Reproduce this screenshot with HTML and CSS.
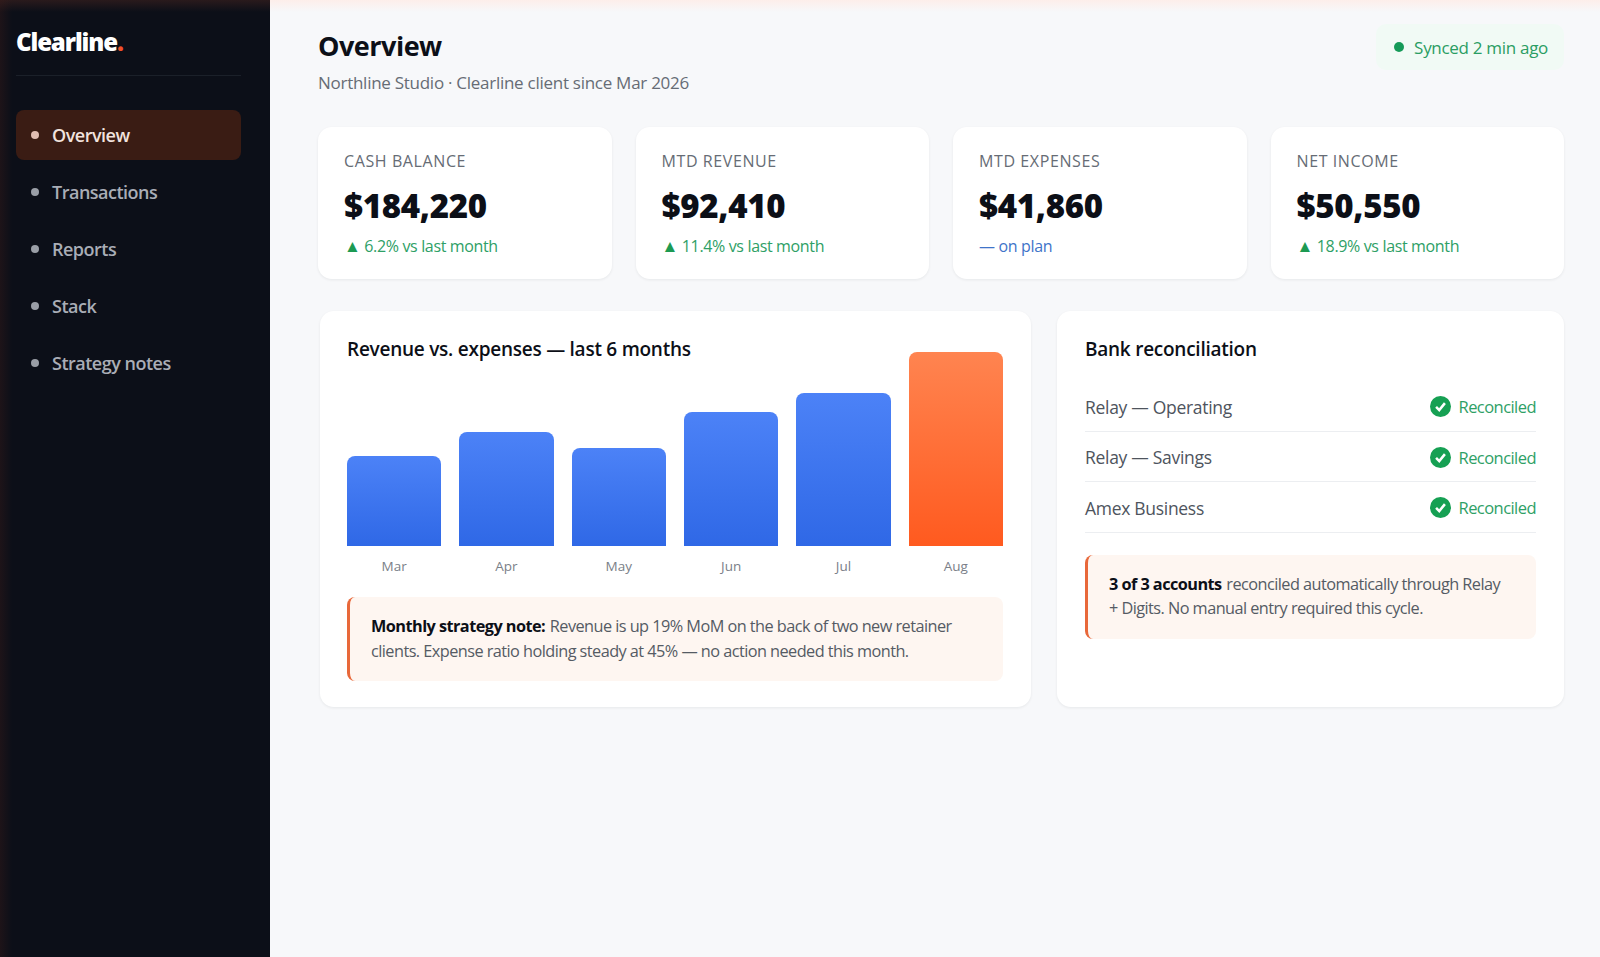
FILE: index.html
```html
<!DOCTYPE html>
<html lang="en">
<head>
    <meta charset="UTF-8">
    <title>Clearline - Overview</title>
    <link rel="stylesheet" href="styles.css">
</head>
<body>
    <aside class="sidebar">
        <div class="logo">Clearline<span>.</span></div>
        <nav class="nav">
            <a class="nav-item active"><i class="dot"></i>Overview</a>
            <a class="nav-item"><i class="dot"></i>Transactions</a>
            <a class="nav-item"><i class="dot"></i>Reports</a>
            <a class="nav-item"><i class="dot"></i>Stack</a>
            <a class="nav-item"><i class="dot"></i>Strategy notes</a>
        </nav>
    </aside>

    <main class="main">
        <header class="page-head">
            <div>
                <h1>Overview</h1>
                <p class="sub">Northline Studio · Clearline client since Mar 2026</p>
            </div>
            <div class="sync"><i class="sync-dot"></i>Synced 2 min ago</div>
        </header>

        <section class="stats">
            <div class="card stat">
                <div class="stat-label">CASH BALANCE</div>
                <div class="stat-value">$184,220</div>
                <div class="stat-delta"><b>▲</b> 6.2% vs last month</div>
            </div>
            <div class="card stat">
                <div class="stat-label">MTD REVENUE</div>
                <div class="stat-value">$92,410</div>
                <div class="stat-delta"><b>▲</b> 11.4% vs last month</div>
            </div>
            <div class="card stat">
                <div class="stat-label">MTD EXPENSES</div>
                <div class="stat-value">$41,860</div>
                <div class="stat-delta flat">— on plan</div>
            </div>
            <div class="card stat">
                <div class="stat-label">NET INCOME</div>
                <div class="stat-value">$50,550</div>
                <div class="stat-delta"><b>▲</b> 18.9% vs last month</div>
            </div>
        </section>

        <section class="panels">
            <div class="card panel">
                <h2>Revenue vs. expenses — last 6 months</h2>
                <div class="chart">
                    <div class="bar-col"><div class="bar" style="height:90px"></div><span>Mar</span></div>
                    <div class="bar-col"><div class="bar" style="height:114px"></div><span>Apr</span></div>
                    <div class="bar-col"><div class="bar" style="height:98px"></div><span>May</span></div>
                    <div class="bar-col"><div class="bar" style="height:134px"></div><span>Jun</span></div>
                    <div class="bar-col"><div class="bar" style="height:153px"></div><span>Jul</span></div>
                    <div class="bar-col"><div class="bar hot" style="height:194px"></div><span>Aug</span></div>
                </div>
                <div class="note"><strong>Monthly strategy note:</strong> Revenue is up 19% MoM on the back of two new retainer clients. Expense ratio holding steady at 45% — no action needed this month.</div>
            </div>

            <div class="card panel bank">
                <h2>Bank reconciliation</h2>
                <div class="bank-list">
                    <div class="bank-row">
                        <span>Relay — Operating</span>
                        <span class="ok"><svg viewBox="0 0 20 20"><circle cx="10" cy="10" r="10" fill="#16a053"/><path d="M5.8 10.4l3 3 5.4-6.6" fill="none" stroke="#fff" stroke-width="2.4"/></svg>Reconciled</span>
                    </div>
                    <div class="bank-row">
                        <span>Relay — Savings</span>
                        <span class="ok"><svg viewBox="0 0 20 20"><circle cx="10" cy="10" r="10" fill="#16a053"/><path d="M5.8 10.4l3 3 5.4-6.6" fill="none" stroke="#fff" stroke-width="2.4"/></svg>Reconciled</span>
                    </div>
                    <div class="bank-row">
                        <span>Amex Business</span>
                        <span class="ok"><svg viewBox="0 0 20 20"><circle cx="10" cy="10" r="10" fill="#16a053"/><path d="M5.8 10.4l3 3 5.4-6.6" fill="none" stroke="#fff" stroke-width="2.4"/></svg>Reconciled</span>
                    </div>
                </div>
                <div class="note"><strong>3 of 3 accounts</strong> reconciled automatically through Relay + Digits. No manual entry required this cycle.</div>
            </div>
        </section>
    </main>
</body>
</html>
```

FILE: styles.css
```css
:root {
    --bg-color: #f7f8fa;
    --ink: #0c0f17;
    --muted: #666c75;
    --green: #16a053;
    --accent: #e8683a;
}

* {
    box-sizing: border-box;
}

html, body {
    height: 100%;
}

body {
    margin: 0;
    display: flex;
    height: 957px;
    overflow: hidden;
    font-family: "Open Sans", "Noto Sans", sans-serif;
    color: var(--ink);
    background: linear-gradient(#fdeeea 0, #f7f8fa 12px) var(--bg-color);
}

.sidebar {
    width: 270px;
    flex: none;
    padding: 27px 29px 0 16px;
    background:
        linear-gradient(90deg, rgba(70, 30, 25, 0.3) 0, rgba(13, 17, 24, 0) 12px),
        linear-gradient(#2a1a1c 0, #0c0f18 12px);
}

.logo {
    color: #fff;
    font-size: 24px;
    font-weight: 800;
    letter-spacing: -1.1px;
    line-height: 30px;
    padding-bottom: 18px;
    border-bottom: 1px solid #1b2029;
}

.logo span {
    color: #f0502a;
}

.nav {
    display: flex;
    flex-direction: column;
    gap: 7px;
    margin-top: 34px;
}

.nav-item {
    display: flex;
    align-items: center;
    gap: 13px;
    height: 50px;
    padding-left: 15px;
    border-radius: 8px;
    color: #a9adb6;
    font-size: 18px;
    font-weight: 600;
    letter-spacing: -0.5px;
}

.nav-item.active {
    background: #3a1c14;
    color: #f2e3de;
}

.dot {
    width: 8px;
    height: 8px;
    border-radius: 50%;
    background: #9a9ea6;
}

.active .dot {
    background: #e0bdb2;
}

.main {
    flex: 1;
    padding: 28px 36px 0 48px;
}

.page-head {
    display: flex;
    justify-content: space-between;
    align-items: flex-start;
}

h1 {
    margin: 0;
    font-size: 27px;
    font-weight: 700;
    letter-spacing: -0.5px;
    line-height: 36px;
}

.sub {
    margin: 8px 0 0;
    font-size: 17px;
    letter-spacing: -0.27px;
    line-height: 22px;
    color: var(--muted);
}

.sync {
    display: flex;
    align-items: center;
    gap: 10px;
    height: 46px;
    margin-top: -4px;
    padding: 0 16px 0 18px;
    border-radius: 10px;
    background: #f1faf5;
    color: #2a9d63;
    font-size: 17px;
    letter-spacing: -0.3px;
}

.sync-dot {
    width: 10px;
    height: 10px;
    border-radius: 50%;
    background: #159a58;
}

.card {
    background: #fff;
    border-radius: 14px;
    box-shadow: 0 1px 3px rgba(20, 25, 35, 0.07);
}

.stats {
    display: grid;
    grid-template-columns: repeat(4, 1fr);
    gap: 24px;
    margin-top: 33px;
}

.stat {
    height: 152px;
    padding: 24px 26px 0;
}

.stat-label {
    font-size: 16px;
    letter-spacing: 0.6px;
    line-height: 20px;
    color: var(--muted);
}

.stat-value {
    margin-top: 13px;
    font-size: 33px;
    font-weight: 800;
    line-height: 44px;
    letter-spacing: -0.3px;
}

.stat-delta {
    margin-top: 8px;
    font-size: 16px;
    letter-spacing: -0.35px;
    line-height: 20px;
    color: #2ea066;
}

.stat-delta b {
    font-size: 17px;
    font-weight: 400;
    line-height: 0;
    color: #1c9a52;
}

.stat-delta.flat {
    color: #3f74c9;
}

.panels {
    display: grid;
    grid-template-columns: 711px 1fr;
    gap: 26px;
    margin: 32px 0 0 2px;
}

.panel {
    height: 396px;
    padding: 26px 28px 0 27px;
}

.panel.bank {
    padding-left: 28px;
}

h2 {
    margin: 0;
    font-size: 19px;
    font-weight: 600;
    letter-spacing: -0.25px;
    line-height: 24px;
}

.chart {
    display: flex;
    align-items: flex-end;
    gap: 18px;
    height: 225px;
    margin-top: -10px;
}

.bar-col {
    flex: 1;
    display: flex;
    flex-direction: column;
    align-items: center;
}

.bar {
    width: 100%;
    border-radius: 8px 8px 0 0;
    background: linear-gradient(#4c82f7, #2f68e6);
}

.bar.hot {
    background: linear-gradient(#ff8450, #ff5a1f);
}

.bar-col span {
    margin-top: 10px;
    height: 20px;
    font-size: 13.5px;
    line-height: 20px;
    color: #7a8088;
}

.note {
    margin-top: 21px;
    padding: 17px 24px 18px 21px;
    border-left: 3px solid var(--accent);
    border-radius: 8px;
    background: #fef6f1;
    font-size: 16.3px;
    letter-spacing: -0.55px;
    line-height: 24.5px;
    color: #555b64;
}

.bank .note {
    padding-right: 30px;
}

.note strong {
    margin-right: 1px;
    color: var(--ink);
}

.bank-list {
    margin-top: 20px;
    margin-bottom: 22px;
}

.bank-row {
    display: flex;
    justify-content: space-between;
    align-items: center;
    height: 50.5px;
    padding-top: 2px;
    border-bottom: 1px solid #eceef1;
    font-size: 17.5px;
    letter-spacing: -0.3px;
    color: #4e545d;
}

.ok {
    display: flex;
    align-items: center;
    gap: 8px;
    font-size: 16.5px;
    letter-spacing: -0.55px;
    color: #2ea066;
}

.ok svg {
    width: 21px;
    height: 21px;
}
```
